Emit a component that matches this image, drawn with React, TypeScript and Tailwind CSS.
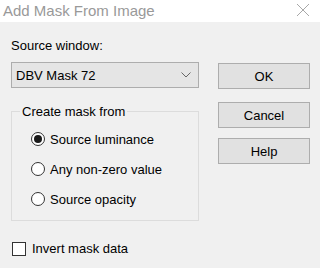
const FONT = "font-['Liberation_Sans',Arial,sans-serif]";

function Radio({ label, checked }: { label: string; checked?: boolean }) {
  return (
    <div className="flex h-[30px] items-center">
      <div className="flex h-[14px] w-[14px] items-center justify-center rounded-full border border-[#333] bg-white">
        {checked && <div className="h-[8px] w-[8px] rounded-full bg-[#1a1a1a]" />}
      </div>
      <span className="ml-[5px] text-[13px] leading-[15px] text-black">{label}</span>
    </div>
  );
}

function Button({ label, className = '' }: { label: string; className?: string }) {
  return (
    <div
      className={`flex h-[26px] w-[92px] items-center justify-center border border-[#adadad] bg-[#e1e1e1] text-[13px] leading-[15px] text-black ${className}`}
    >
      {label}
    </div>
  );
}

export default function App() {
  return (
    <div className={`h-[268px] w-[320px] overflow-hidden bg-[#f0f0f0] ${FONT}`}>
      <div className="flex h-[22px] items-center justify-between bg-white pl-[3px] pr-[10px]">
        <span className="text-[15px] leading-[18px] text-[#999]">Add Mask From Image</span>
        <svg width="14" height="14" viewBox="0 0 14 14" className="mt-[-2px]">
          <path d="M1 1 L13 13 M13 1 L1 13" stroke="#a8a8a8" strokeWidth="1" fill="none" />
        </svg>
      </div>

      <div className="flex pl-[11px]">
        <div className="w-[188px]">
          <div className="mt-[16px] text-[13px] leading-[15px] text-black">Source window:</div>
          <div className="mt-[9px] flex h-[26px] items-center justify-between border border-[#adadad] bg-[#e5e5e5] pl-[4px] pr-[7px]">
            <span className="text-[13px] leading-[15px] text-black">DBV Mask 72</span>
            <svg width="10" height="6" viewBox="0 0 10 6">
              <path d="M0.5 0.5 L5 5 L9.5 0.5" stroke="#666" strokeWidth="1" fill="none" />
            </svg>
          </div>

          <fieldset className="mt-[16px] border border-[#dcdcdc] pb-[6px] pt-[5px]">
            <legend className="ml-[8px] px-[2px] text-[13px] leading-[15px] text-black">Create mask from</legend>
            <div className="pl-[19px]">
              <Radio label="Source luminance" checked />
              <Radio label="Any non-zero value" />
              <Radio label="Source opacity" />
            </div>
          </fieldset>

          <div className="mt-[20px] flex items-center pl-[1px]">
            <div className="h-[14px] w-[14px] border border-[#333] bg-white" />
            <span className="ml-[6px] text-[13px] leading-[15px] text-black">Invert mask data</span>
          </div>
        </div>

        <div className="ml-[19px] flex flex-col">
          <Button label="OK" className="mt-[41px]" />
          <Button label="Cancel" className="mt-[13px]" />
          <Button label="Help" className="mt-[10px]" />
        </div>
      </div>
    </div>
  );
}
